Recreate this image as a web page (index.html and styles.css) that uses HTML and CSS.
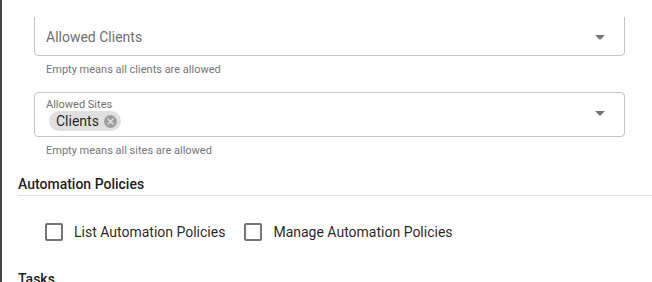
FILE: index.html
```html
<!DOCTYPE html>
<html>
<head>
<meta charset="utf-8">
<link rel="stylesheet" href="styles.css">
</head>
<body>
<div class="page">
  <div class="edge"></div>
  <div class="viewport">
    <div class="content">
      <div class="fields">
        <div class="field">
          <div class="box box-tall">
            <span class="placeholder">Allowed Clients</span>
            <span class="arrow"></span>
          </div>
          <div class="hint">Empty means all clients are allowed</div>
        </div>
        <div class="field">
          <div class="box box-chips">
            <div class="chips-col">
              <span class="label">Allowed Sites</span>
              <span class="chip">Clients<span class="chip-x"><svg width="13" height="13" viewBox="0 0 24 24"><circle cx="12" cy="12" r="12" fill="#9e9e9e"/><path d="M7.5 7.5l9 9M16.5 7.5l-9 9" stroke="#e0e0e0" stroke-width="2.6" stroke-linecap="round"/></svg></span></span>
            </div>
            <span class="arrow"></span>
          </div>
          <div class="hint">Empty means all sites are allowed</div>
        </div>
      </div>
      <div class="section">
        <div class="section-title">Automation Policies</div>
        <div class="checks">
          <label class="check"><span class="cb"></span><span>List Automation Policies</span></label>
          <label class="check"><span class="cb"></span><span>Manage Automation Policies</span></label>
        </div>
      </div>
      <div class="section">
        <div class="section-title">Tasks</div>
      </div>
    </div>
  </div>
</div>
</body>
</html>
```

FILE: styles.css
```css
* { box-sizing: border-box; }
html, body { margin: 0; padding: 0; background: #fff; }
body {
  font-family: Roboto, "Liberation Sans", sans-serif;
  color: rgba(0,0,0,0.87);
  width: 652px;
  height: 282px;
  overflow: hidden;
}
.page { display: flex; height: 282px; }
.edge { width: 2px; background: #464646; flex: none; }
.viewport {
  flex: 1;
  margin-top: 17px;
  overflow: hidden;
}
.content { margin-top: -17px; padding-left: 16px; }
.fields { padding-left: 16px; padding-right: 27px; display: flex; flex-direction: column; gap: 16px; }
.box {
  border: 1px solid #c4c4c4;
  border-radius: 4px;
  display: flex;
  align-items: center;
  padding: 0 19px 0 11px;
}
.box-tall { height: 56px; padding-top: 18px; }
.placeholder { flex: 1; font-size: 14px; color: #6f6f6f; line-height: 17px; }
.arrow {
  width: 0; height: 0;
  border-left: 5px solid transparent;
  border-right: 5px solid transparent;
  border-top: 5px solid #757575;
}
.hint { font-size: 11px; color: #757575; padding: 7px 12px 0; line-height: 13px; }
.box-chips { height: 45px; align-items: flex-start; }
.box-chips .arrow { margin-top: 18px; }
.chips-col { flex: 1; display: flex; flex-direction: column; align-items: flex-start; padding-top: 5px; }
.label { font-size: 11px; color: #6f6f6f; line-height: 13px; }
.chip {
  margin-top: 0;
  margin-left: 3px;
  height: 20px;
  background: #e0e0e0;
  border-radius: 10px;
  display: inline-flex;
  align-items: center;
  gap: 5px;
  padding: 0 4px 0 7px;
  font-size: 14px;
  color: rgba(0,0,0,0.87);
}
.chip-x { display: inline-flex; }
.section-title {
  font-size: 14px;
  font-weight: 500;
  color: rgba(0,0,0,0.9);
  padding: 19px 0 2px;
  border-bottom: 1px solid #e0e0e0;
  line-height: 17px;
}
.checks { display: flex; gap: 19px; padding: 18px 0 2px 27px; }
.check { display: flex; align-items: center; gap: 11px; font-size: 14px; height: 36px; }
.cb {
  width: 18px; height: 18px;
  border: 2px solid #757575;
  border-radius: 2px;
  flex: none;
}
```
